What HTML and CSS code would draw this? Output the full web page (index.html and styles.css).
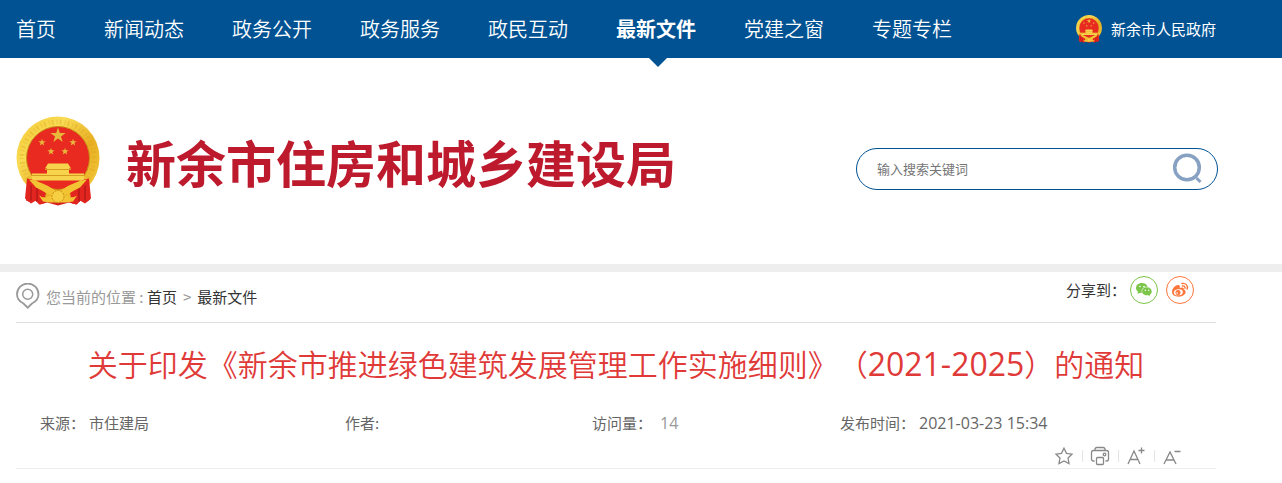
FILE: index.html
```html
<!DOCTYPE html>
<html lang="zh-CN">

<head>
  <meta charset="UTF-8">
  <meta name="viewport" content="width=device-width, initial-scale=1">
  <title>新余市住房和城乡建设局</title>
  <link rel="stylesheet" href="styles.css">
</head>

<body>
  <svg class="defs" aria-hidden="true">
    <defs>
      <linearGradient id="gold" x1="0" y1="0" x2="1" y2="1">
        <stop offset="0" stop-color="#f3c62f" />
        <stop offset="0.3" stop-color="#f9dc55" />
        <stop offset="0.6" stop-color="#e9b024" />
        <stop offset="1" stop-color="#f5cd3e" />
      </linearGradient>
      <polygon id="star" points="0,-10 2.3,-3.1 9.5,-3.1 3.7,1.2 5.9,8.1 0,3.9 -5.9,8.1 -3.7,1.2 -9.5,-3.1 -2.3,-3.1" />
      <symbol id="emblem" viewBox="0 0 84 90">
        <path d="M12 64 L10 84 L15 86 L19 84 L24 88 L31 86 L42 89 L53 86 L60 88 L65 84 L70 86 L74 83 L72 64 Z" fill="#d8201c" />
        <circle cx="42" cy="41.500" r="41.500" fill="url(#gold)" />
        <circle cx="42" cy="41.500" r="36" fill="none" stroke="#d79a1b" stroke-width="5" stroke-dasharray="1 2 2 3" opacity="0.300" />
        <circle cx="42" cy="41.500" r="31.500" fill="#e82a20" stroke="#c98d16" />
        <g fill="#e9b93c">
          <use href="#star" transform="translate(42 19) scale(.8)" />
          <use href="#star" transform="translate(26 26) scale(.38)" />
          <use href="#star" transform="translate(57 26) scale(.38)" />
          <use href="#star" transform="translate(35 35) scale(.38)" />
          <use href="#star" transform="translate(49 35) scale(.38)" />
        </g>
        <path d="M32 47 h20 l3 5 h-2 v5 h15 v7 H16 v-7 h15 v-5 h-2 z" fill="#f8d44c" />
        <path d="M29 53 h26 M16 59 h52" stroke="#d69c22" />
        <path d="M11 62 C20 63 24 68 30 76 L28 87 L23 88 L20 84 L15 87 L9 82 Z M73 62 C64 63 60 68 54 76 L56 87 L61 88 L64 84 L69 87 L75 82 Z" fill="#e3251f" />
        <path d="M15 69 v15 M21 71 v14 M63 71 v14 M69 69 v15" stroke="#9e1414" />
        <path d="M13 63 C25 65 32 69 42 76 C52 69 59 65 71 63 L64 71 C57 74 53 79 42 79 C31 79 27 74 20 71 Z M23 79 C31 84 34 77 42 77 C50 77 53 84 61 79 L57 85 C52 86 49 86 42 86 C35 86 32 86 27 85 Z" fill="#f2c434" />
        <circle cx="42" cy="80" r="6" fill="#f6cf42" stroke="#c98d16" stroke-dasharray="2 1" />
      </symbol>
    </defs>
  </svg>

  <!-- top nav -->
  <div class="topbar">
    <div class="wrap">
      <nav class="nav">
        <a href="#">首页</a>
        <a href="#">新闻动态</a>
        <a href="#">政务公开</a>
        <a href="#">政务服务</a>
        <a href="#">政民互动</a>
        <a href="#" class="on">最新文件</a>
        <a href="#">党建之窗</a>
        <a href="#">专题专栏</a>
      </nav>
      <a href="#" class="gov">
        <svg class="gov-icon" aria-hidden="true"><use href="#emblem" /></svg>
        <span>新余市人民政府</span>
      </a>
    </div>
  </div>

  <!-- logo and search -->
  <header class="header">
    <div class="wrap">
      <a href="#" class="logo">
        <svg class="logo-icon" aria-hidden="true"><use href="#emblem" /></svg>
        <span>新余市住房和城乡建设局</span>
      </a>
      <form class="search">
        <input type="text" class="search-text" placeholder="输入搜索关键词" aria-label="输入搜索关键词">
        <button type="submit" class="search-btn" aria-label="搜索">
          <svg width="32" height="32" viewBox="0 0 32 32" fill="none" stroke="#87a1c3" aria-hidden="true">
            <circle cx="15" cy="14.500" r="12.300" stroke-width="3.500" />
            <path d="M24.500 25 L28.500 29" stroke-width="3" />
          </svg>
        </button>
      </form>
    </div>
  </header>

  <main class="main">
    <div class="position">
      <div class="crumbs">
        <svg width="24" height="28" viewBox="0 0 24 28" fill="none" stroke="#999" stroke-width="1.800" aria-hidden="true">
          <path d="M7.500 20.500 C3 18.500 1 15 1 11.300 A10.700 10.700 0 0 1 22.500 11.300 C22.500 15 20.500 18.500 16 20.500 L11.700 24.700 Z" />
          <circle cx="11.700" cy="11.300" r="5" stroke-width="1.500" />
        </svg>
        <span>您当前的位置 : <a href="#">首页</a><span class="sep">&gt;</span><a href="#">最新文件</a></span>
      </div>
      <div class="share">
        <span class="share-label">分享到：</span>
        <a href="#" class="wechat" aria-label="微信">
          <svg width="18" height="16" viewBox="0 0 18 16" aria-hidden="true">
            <path d="M7 1 C3 1 1 3.500 1 6 C1 7.800 2 9 3 9.800 L2.500 12 L5 10.800 C6 11 7 11.200 8 11 C13 10 13 6 12.600 4.500 C11.600 2 9.500 1 7 1 Z" fill="#7bc549" />
            <path d="M11.700 5 C8.500 5 6.800 7 6.800 9.300 C6.800 12 9.500 14 13 13.500 L15.500 14.700 L15 12.900 C16.300 12 17 10.800 17 9.500 C17 7 14.700 5 11.700 5 Z" fill="#7bc549" stroke="#fff" stroke-width=".6" />
            <g fill="#fff">
              <circle cx="5" cy="4.500" r=".8" />
              <circle cx="9" cy="4.500" r=".8" />
              <circle cx="10.300" cy="8.200" r=".7" />
              <circle cx="13.700" cy="8.200" r=".7" />
            </g>
          </svg>
        </a>
        <a href="#" class="weibo" aria-label="微博">
          <svg width="18" height="16" viewBox="0 0 18 16" aria-hidden="true">
            <path d="M7 3 C4 3 1 7 1 9.800 C1 13 4 14.700 7.700 14.700 C11.700 14.700 14.600 12.400 14.600 10 C14.600 8.500 13.500 7.900 12.700 7.600 C13.300 5.500 11.500 5 8.700 6 C9.400 4.200 8.500 3 7 3 Z" fill="#ff763b" />
            <ellipse cx="7.300" cy="10.300" rx="4.500" ry="3" transform="rotate(-8 7 10)" fill="#fff" />
            <circle cx="7" cy="10.500" r="2.500" fill="#ff763b" />
            <circle cx="6.200" cy="11.100" r=".8" fill="#fff" />
            <path d="M11 1.500 C14.500 .7 17.300 3.500 16.200 7 M11.500 4 C13.300 3.600 14.300 4.800 13.900 6.200" fill="none" stroke="#ff763b" stroke-width="1.400" stroke-linecap="round" />
          </svg>
        </a>
      </div>
    </div>

    <h1 class="title">关于印发《新余市推进绿色建筑发展管理工作实施细则》（<span class="num">2021-2025</span>）的通知</h1>

    <div class="info">
      <div>来源：<span class="val">市住建局</span></div>
      <div>作者:</div>
      <div>访问量：<span class="val num count">14</span></div>
      <div>发布时间：<span class="val num">2021-03-23 15:34</span></div>
    </div>

    <div class="tools">
      <button type="button" aria-label="收藏">
        <svg width="20" height="20" viewBox="0 0 20 20" aria-hidden="true">
          <path d="M10 2.300 L12.500 7.300 L18 8.100 L14 12 L15 17.500 L10 14.900 L5 17.500 L6 12 L2 8.100 L7.500 7.300 Z" />
        </svg>
      </button>
      <button type="button" aria-label="打印">
        <svg width="20" height="20" viewBox="0 0 20 20" aria-hidden="true">
          <path d="M5 4.500 V3.500 Q5 1.500 7 1.500 H13 Q15 1.500 15 3.500 V4.500 M4.500 15 H3.500 Q1.500 15 1.500 13 V6.500 Q1.500 4.500 3.500 4.500 H16.500 Q18.500 4.500 18.500 6.500 V13 Q18.500 15 16.500 15 H15.500" />
          <rect x="6.500" y="11.500" width="7" height="7" rx="1" />
          <circle cx="14.500" cy="8.500" r="1.300" />
        </svg>
      </button>
      <button type="button" aria-label="放大字体">
        <svg width="20" height="20" viewBox="0 0 20 20" aria-hidden="true">
          <path d="M2 18 L8 5 L14 18 M4.500 13.500 H11.500 M12.500 4.500 H18.500 M15.500 1.500 V7.500" />
        </svg>
      </button>
      <button type="button" aria-label="缩小字体">
        <svg width="20" height="20" viewBox="0 0 20 20" aria-hidden="true">
          <path d="M2 18 L8 6 L14 18 M4.500 14 H11.500 M12.500 5.500 H18.500" />
        </svg>
      </button>
    </div>
  </main>
</body>

</html>
```

FILE: styles.css
```css
* {
  box-sizing: border-box;
}

body {
  margin: 0;
  background: #fff;
  color: #333;
  font-family: "Noto Sans CJK SC", sans-serif;
  font-size: 15px;
  line-height: 24px;
  text-spacing-trim: space-all;
}

a {
  color: inherit;
  text-decoration: none;
}

button {
  border: none;
  background: none;
  padding: 0;
  cursor: pointer;
}

svg {
  display: block;
  flex: none;
}

.defs {
  position: absolute;
  width: 0;
  height: 0;
}

.wrap {
  display: flex;
  align-items: center;
  justify-content: space-between;
  padding: 0 64px 0 16px;
}

/* top nav */
.topbar {
  background: #005293;
  color: #fff;
}

.topbar .wrap {
  padding-right: 66px;
}

.nav {
  display: flex;
  gap: 48px;
}

.nav a {
  position: relative;
  font-size: 20px;
  font-weight: 350;
  line-height: 58px;
  white-space: nowrap;
}

.nav .on {
  font-weight: bold;
}

.nav .on::after {
  content: "";
  position: absolute;
  top: 100%;
  left: 50%;
  margin-left: -7px;
  border: 9px solid transparent;
  border-top-color: #005293;
  border-bottom: none;
}

.gov {
  display: flex;
  align-items: center;
  gap: 8px;
  line-height: 22px;
  white-space: nowrap;
}

.gov-icon {
  width: 28px;
  height: 28px;
}

/* logo and search */
.header {
  padding: 58px 0 57px;
  border-bottom: 8px solid #eee;
}

.logo {
  display: flex;
  align-items: center;
  gap: 26px;
  color: #bd1a2d;
  font-size: 50px;
  font-weight: bold;
  line-height: 91px;
  white-space: nowrap;
}

.logo-icon {
  width: 84px;
  height: 91px;
}

.search {
  display: flex;
  align-items: center;
  width: 362px;
  height: 42px;
  margin-top: 14px;
  padding: 0 13px 0 20px;
  border: 1px solid #005293;
  border-radius: 21px;
}

.search-text {
  flex: 1;
  min-width: 0;
  padding: 0;
  border: none;
  outline: none;
  background: none;
  font-family: inherit;
  font-size: 13px;
}

.search-text::placeholder {
  color: #757575;
}

/* article */
.main {
  padding: 0 66px 0 16px;
}

.position {
  display: flex;
  justify-content: space-between;
  height: 51px;
  border-bottom: 1px solid #e0e0e0;
}

.crumbs {
  display: flex;
  align-items: center;
  gap: 6px;
  color: #999;
}

.crumbs a {
  color: #333;
}

.sep {
  margin: 0 6px;
}

.share {
  display: flex;
  align-items: center;
  gap: 8px;
  height: 36px;
  padding-right: 22px;
}

.share-label {
  margin-right: -4px;
}

.share a {
  display: flex;
  align-items: center;
  justify-content: center;
  width: 28px;
  height: 28px;
  border: 1px solid;
  border-radius: 50%;
}

.share .wechat {
  color: #7bc549;
}

.share .weibo {
  color: #ff763b;
}

.title {
  margin: 18px 0 21px;
  color: #df3a38;
  font-size: 30px;
  font-weight: 350;
  line-height: 44px;
  text-align: center;
}

.num {
  font-family: "Open Sans", sans-serif;
}

.title .num {
  font-size: 32px;
  font-weight: 400;
}

.info {
  display: grid;
  grid-template-columns: 305fr 247fr 248fr 352fr;
  padding: 0 24px;
  color: #666;
  line-height: 32px;
}

.info .val {
  margin-left: 4px;
}

.info .num {
  font-size: 16px;
}

.info .count {
  margin-left: 8px;
  color: #999;
}

.tools {
  display: flex;
  justify-content: flex-end;
  padding: 7px 26px 2px;
  border-bottom: 1px solid #eee;
}

.tools button {
  display: flex;
  justify-content: center;
  width: 36px;
  background: linear-gradient(#e5e5e5, #e5e5e5) no-repeat left center / 1px 12px;
}

.tools button:first-child {
  background: none;
}

.tools svg {
  fill: none;
  stroke: #888;
  stroke-width: 1.3;
}
```
